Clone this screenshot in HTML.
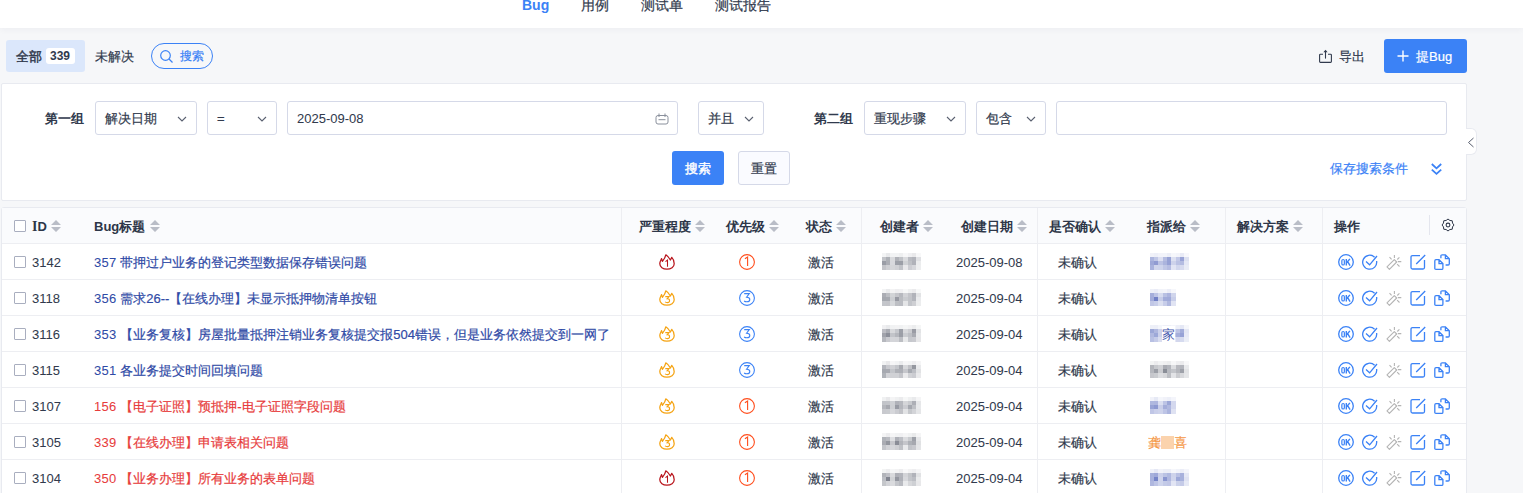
<!DOCTYPE html>
<html><head><meta charset="utf-8">
<style>
*{box-sizing:border-box;margin:0;padding:0}
html,body{width:1523px;height:493px;overflow:hidden}
body{background:#f6f7f9;font-family:"Liberation Sans",sans-serif;font-size:13px;color:#313a4d;position:relative;-webkit-text-stroke-width:0.2px}
.a{position:absolute;white-space:nowrap}
.top{left:0;top:0;width:1523px;height:28px;background:#fff;box-shadow:0 1px 7px rgba(30,40,70,.05)}
.nav{font-size:14px;top:-5px;line-height:20px;color:#313a4d}
.panel{left:1px;top:83px;width:1466px;height:118px;background:#fff;border:1px solid #e8eaf0;border-radius:2px}
.sel{height:34px;top:101px;border:1px solid #d5d9e8;border-radius:3px;background:#fff}
.sel span{position:absolute;left:9px;top:9px;line-height:16px}
.chev{position:absolute;top:12px;width:10px;height:10px}
.lbl{font-weight:bold;-webkit-text-stroke-width:0;top:110px;line-height:18px}
.tbl{left:1px;top:207px;width:1466px;height:300px;background:#fff;border:1px solid #e8eaf0;border-radius:3px}
.thead{left:2px;top:208px;width:1464px;height:36px;background:#fafbfd}
.hline{left:2px;width:1464px;height:1px;background:#edeef2}
.vline{width:1px;background:#edeef2;top:208px;height:290px}
.th{font-weight:bold;-webkit-text-stroke-width:0;top:218px;line-height:18px;color:#2d3648}
.sort{position:absolute;width:10px;height:12px}
.cb{width:12px;height:12px;border:1px solid #a9aebf;border-radius:1px;background:#fff}
.td{line-height:18px}
.blue{color:#2f4aa6}
.red{color:#e73c3c}
</style></head><body>
<div class="a top"></div>
<div class="a nav" style="left:522px;color:#3b82f6;font-weight:bold;-webkit-text-stroke-width:0">Bug</div>
<div class="a nav" style="left:581px">用例</div>
<div class="a nav" style="left:641px">测试单</div>
<div class="a nav" style="left:715px">测试报告</div>

<!-- toolbar -->
<div class="a" style="left:6px;top:40px;width:79px;height:32px;background:#dbe7fb;border-radius:3px"></div>
<div class="a" style="left:16px;top:48px;line-height:18px;-webkit-text-stroke-width:0.45px">全部</div>
<div class="a" style="left:46px;top:48px;width:29px;height:16px;background:#fff;border-radius:3px"></div>
<div class="a" style="left:50px;top:48px;line-height:16px;font-weight:bold;font-size:12px;-webkit-text-stroke-width:0">339</div>
<div class="a" style="left:95px;top:48px;line-height:18px">未解决</div>
<div class="a" style="left:151px;top:43px;width:62px;height:26px;border:1px solid #3b82f6;border-radius:13px"></div>
<svg class="a" style="left:159px;top:49px" width="15" height="15" viewBox="0 0 15 15"><circle cx="6.5" cy="6.5" r="4.8" fill="none" stroke="#3b82f6" stroke-width="1.2"/><path d="M10 10 L13.5 13.5" stroke="#3b82f6" stroke-width="1.3"/></svg>
<div class="a" style="left:180px;top:47px;line-height:18px;font-size:12px;color:#3b82f6">搜索</div>

<svg class="a" style="left:1318px;top:49px" width="15" height="15" viewBox="0 0 15 15"><path d="M5 5.3 H2.4 Q1.6 5.3 1.6 6.1 V12.6 Q1.6 13.4 2.4 13.4 H12.6 Q13.4 13.4 13.4 12.6 V6.1 Q13.4 5.3 12.6 5.3 H10" fill="none" stroke="#313a4d" stroke-width="1.1"/><path d="M7.5 9.6 V2.6" fill="none" stroke="#313a4d" stroke-width="1.1"/><path d="M5.4 3.3 L7.5 0.7 L9.6 3.3 Z" fill="#313a4d"/></svg>
<div class="a" style="left:1339px;top:48px;line-height:18px">导出</div>
<div class="a" style="left:1384px;top:39px;width:83px;height:34px;background:#3b82f6;border-radius:3px"></div>
<svg class="a" style="left:1397px;top:50px" width="12" height="12" viewBox="0 0 12 12"><path d="M6 0.5 V11.5 M0.5 6 H11.5" stroke="#fff" stroke-width="1.4"/></svg>
<div class="a" style="left:1416px;top:48px;line-height:18px;color:#fff;font-size:13px">提Bug</div>

<!-- search panel -->
<div class="a panel"></div>
<div class="a lbl" style="left:45px">第一组</div>
<div class="a sel" style="left:95px;width:102px"><span>解决日期</span><svg class="chev" style="left:81px" viewBox="0 0 10 10"><path d="M1 3 L5 7 L9 3" fill="none" stroke="#5a6070" stroke-width="1.1"/></svg></div>
<div class="a sel" style="left:207px;width:70px"><span>=</span><svg class="chev" style="left:49px" viewBox="0 0 10 10"><path d="M1 3 L5 7 L9 3" fill="none" stroke="#5a6070" stroke-width="1.1"/></svg></div>
<div class="a sel" style="left:287px;width:391px"><span style="-webkit-text-stroke-width:0.05px">2025-09-08</span>
<svg class="a" style="left:367px;top:11px" width="14" height="12" viewBox="0 0 14 12"><rect x="1" y="2.5" width="12" height="8.5" rx="2" fill="none" stroke="#8a909c" stroke-width="1"/><path d="M4 0.5 V4 M10 0.5 V4 M3.5 6.7 H10.5" stroke="#8a909c" stroke-width="1"/></svg></div>
<div class="a sel" style="left:698px;width:66px"><span>并且</span><svg class="chev" style="left:45px" viewBox="0 0 10 10"><path d="M1 3 L5 7 L9 3" fill="none" stroke="#5a6070" stroke-width="1.1"/></svg></div>
<div class="a lbl" style="left:814px">第二组</div>
<div class="a sel" style="left:864px;width:102px"><span>重现步骤</span><svg class="chev" style="left:81px" viewBox="0 0 10 10"><path d="M1 3 L5 7 L9 3" fill="none" stroke="#5a6070" stroke-width="1.1"/></svg></div>
<div class="a sel" style="left:976px;width:70px"><span>包含</span><svg class="chev" style="left:49px" viewBox="0 0 10 10"><path d="M1 3 L5 7 L9 3" fill="none" stroke="#5a6070" stroke-width="1.1"/></svg></div>
<div class="a sel" style="left:1056px;width:391px"></div>
<div class="a" style="left:672px;top:151px;width:52px;height:34px;background:#3b82f6;border-radius:3px"></div>
<div class="a" style="left:685px;top:160px;line-height:18px;color:#fff;-webkit-text-stroke-width:0.4px">搜索</div>
<div class="a" style="left:738px;top:151px;width:52px;height:34px;background:#fafbff;border:1px solid #d5d9e8;border-radius:3px"></div>
<div class="a" style="left:751px;top:160px;line-height:18px">重置</div>
<div class="a" style="left:1330px;top:160px;line-height:18px;color:#3b82f6">保存搜索条件</div>
<svg class="a" style="left:1429.5px;top:161px" width="14" height="16" viewBox="0 0 14 16"><path d="M1.8 3 L6.5 7.3 L11.2 3 M1.8 8.6 L6.5 12.9 L11.2 8.6" fill="none" stroke="#3b82f6" stroke-width="1.8"/></svg>
<div class="a" style="left:1466px;top:128px;width:11px;height:27px;background:#fff;border:1px solid #e8eaf0;border-left:none;border-radius:0 6px 6px 0"></div>
<svg class="a" style="left:1467px;top:137px" width="8" height="11" viewBox="0 0 8 11"><path d="M6.5 1 L1.5 5.5 L6.5 10" fill="none" stroke="#5a6070" stroke-width="1"/></svg>

<!-- table -->
<div class="a tbl"></div>
<div class="a thead"></div>
<div id="rows"><div class="a cb" style="left:14px;top:220px"></div>
<div class="a th" style="left:32px"><span style='font-family:Liberation Serif;font-size:14px'>I</span>D</div>
<svg class="sort a" style="left:51px;top:220px" viewBox="0 0 10 12"><path d="M5 0 L10 5 H0Z M5 12 L10 7 H0Z" fill="#b9bdc7"/></svg>
<div class="a th" style="left:94px">Bug标题</div>
<svg class="sort a" style="left:150px;top:220px" viewBox="0 0 10 12"><path d="M5 0 L10 5 H0Z M5 12 L10 7 H0Z" fill="#b9bdc7"/></svg>
<div class="a th" style="left:639px">严重程度</div>
<svg class="sort a" style="left:695px;top:220px" viewBox="0 0 10 12"><path d="M5 0 L10 5 H0Z M5 12 L10 7 H0Z" fill="#b9bdc7"/></svg>
<div class="a th" style="left:726px">优先级</div>
<svg class="sort a" style="left:769px;top:220px" viewBox="0 0 10 12"><path d="M5 0 L10 5 H0Z M5 12 L10 7 H0Z" fill="#b9bdc7"/></svg>
<div class="a th" style="left:806px">状态</div>
<svg class="sort a" style="left:836px;top:220px" viewBox="0 0 10 12"><path d="M5 0 L10 5 H0Z M5 12 L10 7 H0Z" fill="#b9bdc7"/></svg>
<div class="a th" style="left:880px">创建者</div>
<svg class="sort a" style="left:923px;top:220px" viewBox="0 0 10 12"><path d="M5 0 L10 5 H0Z M5 12 L10 7 H0Z" fill="#b9bdc7"/></svg>
<div class="a th" style="left:961px">创建日期</div>
<svg class="sort a" style="left:1017px;top:220px" viewBox="0 0 10 12"><path d="M5 0 L10 5 H0Z M5 12 L10 7 H0Z" fill="#b9bdc7"/></svg>
<div class="a th" style="left:1049px">是否确认</div>
<svg class="sort a" style="left:1105px;top:220px" viewBox="0 0 10 12"><path d="M5 0 L10 5 H0Z M5 12 L10 7 H0Z" fill="#b9bdc7"/></svg>
<div class="a th" style="left:1147px">指派给</div>
<svg class="sort a" style="left:1190px;top:220px" viewBox="0 0 10 12"><path d="M5 0 L10 5 H0Z M5 12 L10 7 H0Z" fill="#b9bdc7"/></svg>
<div class="a th" style="left:1237px">解决方案</div>
<svg class="sort a" style="left:1293px;top:220px" viewBox="0 0 10 12"><path d="M5 0 L10 5 H0Z M5 12 L10 7 H0Z" fill="#b9bdc7"/></svg>
<div class="a th" style="left:1334px">操作</div>
<div class="a" style="left:1429px;top:215px;width:1px;height:20px;background:#e4e6ee"></div>
<svg class="a" style="left:1441px;top:218px" width="14" height="14" viewBox="0 0 14 14"><path d="M7.00 1.00 L8.88 2.47 L11.24 2.76 L11.53 5.12 L13.00 7.00 L11.53 8.88 L11.24 11.24 L8.88 11.53 L7.00 13.00 L5.12 11.53 L2.76 11.24 L2.47 8.88 L1.00 7.00 L2.47 5.12 L2.76 2.76 L5.12 2.47 Z" fill="none" stroke="#2d3648" stroke-width="1" stroke-linejoin="round"/><circle cx="7" cy="7" r="1.9" fill="none" stroke="#2d3648" stroke-width="1.05"/></svg>
<div class="a hline" style="top:243px"></div>
<div class="a hline" style="top:279px"></div>
<div class="a hline" style="top:315px"></div>
<div class="a hline" style="top:351px"></div>
<div class="a hline" style="top:387px"></div>
<div class="a hline" style="top:423px"></div>
<div class="a hline" style="top:459px"></div>
<div class="a hline" style="top:495px"></div>
<div class="a vline" style="left:621px"></div>
<div class="a vline" style="left:861px"></div>
<div class="a vline" style="left:1037px"></div>
<div class="a vline" style="left:1225px"></div>
<div class="a vline" style="left:1322px"></div>
<div class="a cb" style="left:14px;top:256px"></div>
<div class="a td" style="left:32px;top:254px;-webkit-text-stroke-width:0.05px">3142</div>
<div class="a td blue" style="left:94px;top:254px"><span style="-webkit-text-stroke-width:0.05px;letter-spacing:0.25px">357 </span>带押过户业务的登记类型数据保存错误问题</div>
<svg class="a" style="left:659px;top:254px" width="16" height="16" viewBox="0 0 16 16"><path d="M7.9 15.2 C4 15.2 0.8 13 0.8 9.8 C0.8 7.8 1.8 6.2 2.6 4.6 L3.4 7.4 C4.8 5.6 6.4 3.2 6.8 0.8 C8.6 1.8 10.2 3.8 11.4 6 L12.8 3.4 C14.4 5 15.2 7.4 15.2 9.8 C15.2 13 12 15.2 7.9 15.2 Z" fill="none" stroke="#b8141b" stroke-width="1.25" stroke-linejoin="round"/><path d="M6.5 7.6 L8.5 6 V12.7" fill="none" stroke="#b8141b" stroke-width="1.05"/></svg>
<svg class="a" style="left:739px;top:254px" width="16" height="16" viewBox="0 0 16 16"><circle cx="8" cy="8" r="7.4" fill="none" stroke="#ff4d1c" stroke-width="1.1"/><path d="M5.9 4.8 L8.6 3.1 V12" fill="none" stroke="#ff4d1c" stroke-width="1.1"/></svg>
<div class="a td" style="left:808px;top:254px">激活</div>
<i class="a" style="left:882px;top:253px;width:4px;height:4px;background:#f3f4f5"></i><i class="a" style="left:886px;top:253px;width:4px;height:4px;background:#e8e9eb"></i><i class="a" style="left:890px;top:253px;width:5px;height:4px;background:#f2f3f4"></i><i class="a" style="left:895px;top:253px;width:4px;height:4px;background:#f2f3f4"></i><i class="a" style="left:899px;top:253px;width:4px;height:4px;background:#eeeff0"></i><i class="a" style="left:903px;top:253px;width:5px;height:4px;background:#f7f7f8"></i><i class="a" style="left:908px;top:253px;width:4px;height:4px;background:#f0f0f2"></i><i class="a" style="left:912px;top:253px;width:4px;height:4px;background:#e9e9eb"></i><i class="a" style="left:916px;top:253px;width:5px;height:4px;background:#f8f8f9"></i><i class="a" style="left:882px;top:257px;width:4px;height:4px;background:#c2c4c9"></i><i class="a" style="left:886px;top:257px;width:4px;height:4px;background:#adb0b6"></i><i class="a" style="left:890px;top:257px;width:5px;height:4px;background:#d9dadd"></i><i class="a" style="left:895px;top:257px;width:4px;height:4px;background:#b0b2b8"></i><i class="a" style="left:899px;top:257px;width:4px;height:4px;background:#c0c2c7"></i><i class="a" style="left:903px;top:257px;width:5px;height:4px;background:#dadbde"></i><i class="a" style="left:908px;top:257px;width:4px;height:4px;background:#b9bbc1"></i><i class="a" style="left:912px;top:257px;width:4px;height:4px;background:#b2b4bb"></i><i class="a" style="left:916px;top:257px;width:5px;height:4px;background:#e0e1e4"></i><i class="a" style="left:882px;top:261px;width:4px;height:4px;background:#9a9da6"></i><i class="a" style="left:886px;top:261px;width:4px;height:4px;background:#acaeb5"></i><i class="a" style="left:890px;top:261px;width:5px;height:4px;background:#d8d9dd"></i><i class="a" style="left:895px;top:261px;width:4px;height:4px;background:#9da0a8"></i><i class="a" style="left:899px;top:261px;width:4px;height:4px;background:#9c9fa7"></i><i class="a" style="left:903px;top:261px;width:5px;height:4px;background:#d0d2d5"></i><i class="a" style="left:908px;top:261px;width:4px;height:4px;background:#bfc1c6"></i><i class="a" style="left:912px;top:261px;width:4px;height:4px;background:#b0b2b9"></i><i class="a" style="left:916px;top:261px;width:5px;height:4px;background:#ebeced"></i><i class="a" style="left:882px;top:265px;width:4px;height:5px;background:#c4c5ca"></i><i class="a" style="left:886px;top:265px;width:4px;height:5px;background:#cfd0d4"></i><i class="a" style="left:890px;top:265px;width:5px;height:5px;background:#d5d6d9"></i><i class="a" style="left:895px;top:265px;width:4px;height:5px;background:#d0d1d5"></i><i class="a" style="left:899px;top:265px;width:4px;height:5px;background:#c1c3c8"></i><i class="a" style="left:903px;top:265px;width:5px;height:5px;background:#e9e9eb"></i><i class="a" style="left:908px;top:265px;width:4px;height:5px;background:#cdced3"></i><i class="a" style="left:912px;top:265px;width:4px;height:5px;background:#d6d7db"></i><i class="a" style="left:916px;top:265px;width:5px;height:5px;background:#edeeef"></i>
<div class="a td" style="left:956px;top:254px;-webkit-text-stroke-width:0.05px">2025-09-08</div>
<div class="a td" style="left:1058px;top:254px">未确认</div>
<i class="a" style="left:1150px;top:253px;width:4px;height:4px;background:#f1f2f9"></i><i class="a" style="left:1154px;top:253px;width:4px;height:4px;background:#edeff8"></i><i class="a" style="left:1158px;top:253px;width:5px;height:4px;background:#f2f3fa"></i><i class="a" style="left:1163px;top:253px;width:4px;height:4px;background:#f2f4fa"></i><i class="a" style="left:1167px;top:253px;width:4px;height:4px;background:#eceef7"></i><i class="a" style="left:1171px;top:253px;width:5px;height:4px;background:#f6f7fb"></i><i class="a" style="left:1176px;top:253px;width:4px;height:4px;background:#f3f4fa"></i><i class="a" style="left:1180px;top:253px;width:4px;height:4px;background:#e9ebf6"></i><i class="a" style="left:1184px;top:253px;width:5px;height:4px;background:#f8f8fc"></i><i class="a" style="left:1150px;top:257px;width:4px;height:4px;background:#acb5de"></i><i class="a" style="left:1154px;top:257px;width:4px;height:4px;background:#c0c7e6"></i><i class="a" style="left:1158px;top:257px;width:5px;height:4px;background:#dcdff1"></i><i class="a" style="left:1163px;top:257px;width:4px;height:4px;background:#b4bce1"></i><i class="a" style="left:1167px;top:257px;width:4px;height:4px;background:#97a2d5"></i><i class="a" style="left:1171px;top:257px;width:5px;height:4px;background:#dce0f1"></i><i class="a" style="left:1176px;top:257px;width:4px;height:4px;background:#c2c8e7"></i><i class="a" style="left:1180px;top:257px;width:4px;height:4px;background:#99a3d6"></i><i class="a" style="left:1184px;top:257px;width:5px;height:4px;background:#dde1f1"></i><i class="a" style="left:1150px;top:261px;width:4px;height:4px;background:#9ea8d8"></i><i class="a" style="left:1154px;top:261px;width:4px;height:4px;background:#909bd2"></i><i class="a" style="left:1158px;top:261px;width:5px;height:4px;background:#bcc3e4"></i><i class="a" style="left:1163px;top:261px;width:4px;height:4px;background:#abb4dd"></i><i class="a" style="left:1167px;top:261px;width:4px;height:4px;background:#96a1d5"></i><i class="a" style="left:1171px;top:261px;width:5px;height:4px;background:#ced3eb"></i><i class="a" style="left:1176px;top:261px;width:4px;height:4px;background:#bbc2e4"></i><i class="a" style="left:1180px;top:261px;width:4px;height:4px;background:#b4bce1"></i><i class="a" style="left:1184px;top:261px;width:5px;height:4px;background:#e5e8f5"></i><i class="a" style="left:1150px;top:265px;width:4px;height:5px;background:#a9b2dd"></i><i class="a" style="left:1154px;top:265px;width:4px;height:5px;background:#d0d5ec"></i><i class="a" style="left:1158px;top:265px;width:5px;height:5px;background:#ced4ec"></i><i class="a" style="left:1163px;top:265px;width:4px;height:5px;background:#c0c7e6"></i><i class="a" style="left:1167px;top:265px;width:4px;height:5px;background:#b6bde2"></i><i class="a" style="left:1171px;top:265px;width:5px;height:5px;background:#e2e5f4"></i><i class="a" style="left:1176px;top:265px;width:4px;height:5px;background:#d2d7ed"></i><i class="a" style="left:1180px;top:265px;width:4px;height:5px;background:#d7dbef"></i><i class="a" style="left:1184px;top:265px;width:5px;height:5px;background:#e9ecf6"></i>
<svg class="a" style="left:1338px;top:254px" width="16" height="16" viewBox="0 0 16 16"><circle cx="8" cy="8" r="7.3" fill="none" stroke="#3b82f6" stroke-width="1.3"/><rect x="3.85" y="5.5" width="2.5" height="5.5" rx="1.25" fill="none" stroke="#3b82f6" stroke-width="1.2"/><path d="M8.3 4.9 V11.6 M11.9 4.9 L8.6 8.8 M9.6 7.6 L12.1 11.6" fill="none" stroke="#3b82f6" stroke-width="1.4"/></svg><svg class="a" style="left:1362px;top:254px" width="16" height="16" viewBox="0 0 16 16"><path d="M12.6 3.2 A7 7 0 1 0 14.6 7" fill="none" stroke="#3b82f6" stroke-width="1.3"/><path d="M4 7.6 L7.6 10.8 L15 2" fill="none" stroke="#3b82f6" stroke-width="1.3"/></svg><svg class="a" style="left:1386px;top:254px" width="16" height="16" viewBox="0 0 16 16"><path d="M1 12.9 L8.3 5.6 L10.7 8 L3.4 15.3 Z" fill="none" stroke="#b4b4b4" stroke-width="1.1" stroke-linejoin="round"/><path d="M8.4 0.9 V3.9 M3.5 3.1 L5.6 5.3 M13.4 3.4 L11.3 5.5 M11.9 7.6 H15.3 M11.1 10.2 L13.5 12.5" stroke="#b4b4b4" stroke-width="1.1"/></svg><svg class="a" style="left:1410px;top:254px" width="16" height="16" viewBox="0 0 16 16"><path d="M10 1.7 H2.5 Q1 1.7 1 3.2 V13.5 Q1 15 2.5 15 H13 Q14.5 15 14.5 13.5 V6" fill="none" stroke="#3b82f6" stroke-width="1.3"/><path d="M6.2 10 L15.2 1" stroke="#3b82f6" stroke-width="1.3"/></svg><svg class="a" style="left:1434px;top:254px" width="17" height="17" viewBox="0 0 17 17"><path d="M6.9 4.3 V2 Q6.9 0.8 8.1 0.8 H11.4 L15.3 4.7 V9.8 Q15.3 11 14.1 11 H11.6 M11.4 0.8 V4.7 H15.3" fill="none" stroke="#3b82f6" stroke-width="1.3"/><path d="M0.8 6.9 Q0.8 5.7 2 5.7 H5 L8.9 9.6 V14.2 Q8.9 15.4 7.7 15.4 H2 Q0.8 15.4 0.8 14.2 Z M5 5.7 V9.6 H8.9" fill="none" stroke="#3b82f6" stroke-width="1.3"/></svg>
<div class="a cb" style="left:14px;top:292px"></div>
<div class="a td" style="left:32px;top:290px;-webkit-text-stroke-width:0.05px">3118</div>
<div class="a td blue" style="left:94px;top:290px"><span style="-webkit-text-stroke-width:0.05px;letter-spacing:0.25px">356 </span>需求26--【在线办理】未显示抵押物清单按钮</div>
<svg class="a" style="left:659px;top:290px" width="16" height="16" viewBox="0 0 16 16"><path d="M7.9 15.2 C4 15.2 0.8 13 0.8 9.8 C0.8 7.8 1.8 6.2 2.6 4.6 L3.4 7.4 C4.8 5.6 6.4 3.2 6.8 0.8 C8.6 1.8 10.2 3.8 11.4 6 L12.8 3.4 C14.4 5 15.2 7.4 15.2 9.8 C15.2 13 12 15.2 7.9 15.2 Z" fill="none" stroke="#f5a312" stroke-width="1.25" stroke-linejoin="round"/><path d="M6.3 6.6 H10.1 L8.1 8.8 Q10.6 8.8 10.6 10.7 Q10.6 12.6 8.3 12.6 Q6.9 12.6 6 11.9" fill="none" stroke="#f5a312" stroke-width="1.05"/></svg>
<svg class="a" style="left:739px;top:290px" width="16" height="16" viewBox="0 0 16 16"><circle cx="8" cy="8" r="7.4" fill="none" stroke="#3b82f6" stroke-width="1.1"/><path d="M5.2 3.6 H10.3 L7.6 7.2 Q10.8 7.2 10.8 9.5 Q10.8 11.8 7.9 11.8 Q6.2 11.8 5.1 11" fill="none" stroke="#3b82f6" stroke-width="1.1"/></svg>
<div class="a td" style="left:808px;top:290px">激活</div>
<i class="a" style="left:882px;top:289px;width:4px;height:4px;background:#f3f4f5"></i><i class="a" style="left:886px;top:289px;width:4px;height:4px;background:#e9eaec"></i><i class="a" style="left:890px;top:289px;width:5px;height:4px;background:#f3f3f4"></i><i class="a" style="left:895px;top:289px;width:4px;height:4px;background:#eeeef0"></i><i class="a" style="left:899px;top:289px;width:4px;height:4px;background:#f0f0f2"></i><i class="a" style="left:903px;top:289px;width:5px;height:4px;background:#f7f8f8"></i><i class="a" style="left:908px;top:289px;width:4px;height:4px;background:#eff0f1"></i><i class="a" style="left:912px;top:289px;width:4px;height:4px;background:#eaeaec"></i><i class="a" style="left:916px;top:289px;width:5px;height:4px;background:#f7f8f8"></i><i class="a" style="left:882px;top:293px;width:4px;height:4px;background:#abadb4"></i><i class="a" style="left:886px;top:293px;width:4px;height:4px;background:#bcbec3"></i><i class="a" style="left:890px;top:293px;width:5px;height:4px;background:#d2d4d7"></i><i class="a" style="left:895px;top:293px;width:4px;height:4px;background:#c5c6cb"></i><i class="a" style="left:899px;top:293px;width:4px;height:4px;background:#b7b9bf"></i><i class="a" style="left:903px;top:293px;width:5px;height:4px;background:#d2d3d7"></i><i class="a" style="left:908px;top:293px;width:4px;height:4px;background:#c4c5ca"></i><i class="a" style="left:912px;top:293px;width:4px;height:4px;background:#b1b3ba"></i><i class="a" style="left:916px;top:293px;width:5px;height:4px;background:#e2e3e5"></i><i class="a" style="left:882px;top:297px;width:4px;height:4px;background:#a5a8af"></i><i class="a" style="left:886px;top:297px;width:4px;height:4px;background:#a6a9b0"></i><i class="a" style="left:890px;top:297px;width:5px;height:4px;background:#ccced2"></i><i class="a" style="left:895px;top:297px;width:4px;height:4px;background:#989aa3"></i><i class="a" style="left:899px;top:297px;width:4px;height:4px;background:#babcc1"></i><i class="a" style="left:903px;top:297px;width:5px;height:4px;background:#caccd0"></i><i class="a" style="left:908px;top:297px;width:4px;height:4px;background:#c2c4c9"></i><i class="a" style="left:912px;top:297px;width:4px;height:4px;background:#b3b5bc"></i><i class="a" style="left:916px;top:297px;width:5px;height:4px;background:#eaebed"></i><i class="a" style="left:882px;top:301px;width:4px;height:5px;background:#c4c6cb"></i><i class="a" style="left:886px;top:301px;width:4px;height:5px;background:#c3c4c9"></i><i class="a" style="left:890px;top:301px;width:5px;height:5px;background:#d6d8db"></i><i class="a" style="left:895px;top:301px;width:4px;height:5px;background:#bdbfc4"></i><i class="a" style="left:899px;top:301px;width:4px;height:5px;background:#babcc2"></i><i class="a" style="left:903px;top:301px;width:5px;height:5px;background:#e4e5e7"></i><i class="a" style="left:908px;top:301px;width:4px;height:5px;background:#c3c5ca"></i><i class="a" style="left:912px;top:301px;width:4px;height:5px;background:#cecfd3"></i><i class="a" style="left:916px;top:301px;width:5px;height:5px;background:#ecedee"></i>
<div class="a td" style="left:956px;top:290px;-webkit-text-stroke-width:0.05px">2025-09-04</div>
<div class="a td" style="left:1058px;top:290px">未确认</div>
<i class="a" style="left:1150px;top:289px;width:4px;height:4px;background:#eef0f8"></i><i class="a" style="left:1154px;top:289px;width:4px;height:4px;background:#eaecf7"></i><i class="a" style="left:1158px;top:289px;width:5px;height:4px;background:#f1f3f9"></i><i class="a" style="left:1163px;top:289px;width:4px;height:4px;background:#f3f4fa"></i><i class="a" style="left:1167px;top:289px;width:4px;height:4px;background:#ebedf7"></i><i class="a" style="left:1171px;top:289px;width:5px;height:4px;background:#f6f7fb"></i><i class="a" style="left:1150px;top:293px;width:4px;height:4px;background:#a5aedb"></i><i class="a" style="left:1154px;top:293px;width:4px;height:4px;background:#bdc4e5"></i><i class="a" style="left:1158px;top:293px;width:5px;height:4px;background:#d6dbef"></i><i class="a" style="left:1163px;top:293px;width:4px;height:4px;background:#b9c1e3"></i><i class="a" style="left:1167px;top:293px;width:4px;height:4px;background:#acb4de"></i><i class="a" style="left:1171px;top:293px;width:5px;height:4px;background:#d0d5ec"></i><i class="a" style="left:1150px;top:297px;width:4px;height:4px;background:#a3acda"></i><i class="a" style="left:1154px;top:297px;width:4px;height:4px;background:#7180c6"></i><i class="a" style="left:1158px;top:297px;width:5px;height:4px;background:#c6cce8"></i><i class="a" style="left:1163px;top:297px;width:4px;height:4px;background:#a2acda"></i><i class="a" style="left:1167px;top:297px;width:4px;height:4px;background:#a0aad9"></i><i class="a" style="left:1171px;top:297px;width:5px;height:4px;background:#c8cee9"></i><i class="a" style="left:1150px;top:301px;width:4px;height:5px;background:#c1c7e6"></i><i class="a" style="left:1154px;top:301px;width:4px;height:5px;background:#c8cee9"></i><i class="a" style="left:1158px;top:301px;width:5px;height:5px;background:#dbdff0"></i><i class="a" style="left:1163px;top:301px;width:4px;height:5px;background:#c7cde9"></i><i class="a" style="left:1167px;top:301px;width:4px;height:5px;background:#b0b8df"></i><i class="a" style="left:1171px;top:301px;width:5px;height:5px;background:#e1e4f3"></i>
<svg class="a" style="left:1338px;top:290px" width="16" height="16" viewBox="0 0 16 16"><circle cx="8" cy="8" r="7.3" fill="none" stroke="#3b82f6" stroke-width="1.3"/><rect x="3.85" y="5.5" width="2.5" height="5.5" rx="1.25" fill="none" stroke="#3b82f6" stroke-width="1.2"/><path d="M8.3 4.9 V11.6 M11.9 4.9 L8.6 8.8 M9.6 7.6 L12.1 11.6" fill="none" stroke="#3b82f6" stroke-width="1.4"/></svg><svg class="a" style="left:1362px;top:290px" width="16" height="16" viewBox="0 0 16 16"><path d="M12.6 3.2 A7 7 0 1 0 14.6 7" fill="none" stroke="#3b82f6" stroke-width="1.3"/><path d="M4 7.6 L7.6 10.8 L15 2" fill="none" stroke="#3b82f6" stroke-width="1.3"/></svg><svg class="a" style="left:1386px;top:290px" width="16" height="16" viewBox="0 0 16 16"><path d="M1 12.9 L8.3 5.6 L10.7 8 L3.4 15.3 Z" fill="none" stroke="#b4b4b4" stroke-width="1.1" stroke-linejoin="round"/><path d="M8.4 0.9 V3.9 M3.5 3.1 L5.6 5.3 M13.4 3.4 L11.3 5.5 M11.9 7.6 H15.3 M11.1 10.2 L13.5 12.5" stroke="#b4b4b4" stroke-width="1.1"/></svg><svg class="a" style="left:1410px;top:290px" width="16" height="16" viewBox="0 0 16 16"><path d="M10 1.7 H2.5 Q1 1.7 1 3.2 V13.5 Q1 15 2.5 15 H13 Q14.5 15 14.5 13.5 V6" fill="none" stroke="#3b82f6" stroke-width="1.3"/><path d="M6.2 10 L15.2 1" stroke="#3b82f6" stroke-width="1.3"/></svg><svg class="a" style="left:1434px;top:290px" width="17" height="17" viewBox="0 0 17 17"><path d="M6.9 4.3 V2 Q6.9 0.8 8.1 0.8 H11.4 L15.3 4.7 V9.8 Q15.3 11 14.1 11 H11.6 M11.4 0.8 V4.7 H15.3" fill="none" stroke="#3b82f6" stroke-width="1.3"/><path d="M0.8 6.9 Q0.8 5.7 2 5.7 H5 L8.9 9.6 V14.2 Q8.9 15.4 7.7 15.4 H2 Q0.8 15.4 0.8 14.2 Z M5 5.7 V9.6 H8.9" fill="none" stroke="#3b82f6" stroke-width="1.3"/></svg>
<div class="a cb" style="left:14px;top:328px"></div>
<div class="a td" style="left:32px;top:326px;-webkit-text-stroke-width:0.05px">3116</div>
<div class="a td blue" style="left:94px;top:326px"><span style="-webkit-text-stroke-width:0.05px;letter-spacing:0.25px">353 </span>【业务复核】房屋批量抵押注销业务复核提交报504错误，但是业务依然提交到一网了</div>
<svg class="a" style="left:659px;top:326px" width="16" height="16" viewBox="0 0 16 16"><path d="M7.9 15.2 C4 15.2 0.8 13 0.8 9.8 C0.8 7.8 1.8 6.2 2.6 4.6 L3.4 7.4 C4.8 5.6 6.4 3.2 6.8 0.8 C8.6 1.8 10.2 3.8 11.4 6 L12.8 3.4 C14.4 5 15.2 7.4 15.2 9.8 C15.2 13 12 15.2 7.9 15.2 Z" fill="none" stroke="#f5a312" stroke-width="1.25" stroke-linejoin="round"/><path d="M6.3 6.6 H10.1 L8.1 8.8 Q10.6 8.8 10.6 10.7 Q10.6 12.6 8.3 12.6 Q6.9 12.6 6 11.9" fill="none" stroke="#f5a312" stroke-width="1.05"/></svg>
<svg class="a" style="left:739px;top:326px" width="16" height="16" viewBox="0 0 16 16"><circle cx="8" cy="8" r="7.4" fill="none" stroke="#3b82f6" stroke-width="1.1"/><path d="M5.2 3.6 H10.3 L7.6 7.2 Q10.8 7.2 10.8 9.5 Q10.8 11.8 7.9 11.8 Q6.2 11.8 5.1 11" fill="none" stroke="#3b82f6" stroke-width="1.1"/></svg>
<div class="a td" style="left:808px;top:326px">激活</div>
<i class="a" style="left:882px;top:325px;width:4px;height:4px;background:#f0f0f2"></i><i class="a" style="left:886px;top:325px;width:4px;height:4px;background:#e9eaec"></i><i class="a" style="left:890px;top:325px;width:5px;height:4px;background:#f1f2f3"></i><i class="a" style="left:895px;top:325px;width:4px;height:4px;background:#f3f3f4"></i><i class="a" style="left:899px;top:325px;width:4px;height:4px;background:#f1f2f3"></i><i class="a" style="left:903px;top:325px;width:5px;height:4px;background:#f5f6f6"></i><i class="a" style="left:908px;top:325px;width:4px;height:4px;background:#f2f2f3"></i><i class="a" style="left:912px;top:325px;width:4px;height:4px;background:#ecedee"></i><i class="a" style="left:916px;top:325px;width:5px;height:4px;background:#f5f6f6"></i><i class="a" style="left:882px;top:329px;width:4px;height:4px;background:#bdbec4"></i><i class="a" style="left:886px;top:329px;width:4px;height:4px;background:#abadb4"></i><i class="a" style="left:890px;top:329px;width:5px;height:4px;background:#d8d9dc"></i><i class="a" style="left:895px;top:329px;width:4px;height:4px;background:#c6c8cd"></i><i class="a" style="left:899px;top:329px;width:4px;height:4px;background:#9da0a8"></i><i class="a" style="left:903px;top:329px;width:5px;height:4px;background:#d8d9dc"></i><i class="a" style="left:908px;top:329px;width:4px;height:4px;background:#cccdd1"></i><i class="a" style="left:912px;top:329px;width:4px;height:4px;background:#9a9ca5"></i><i class="a" style="left:916px;top:329px;width:5px;height:4px;background:#e2e3e5"></i><i class="a" style="left:882px;top:333px;width:4px;height:4px;background:#a1a3ab"></i><i class="a" style="left:886px;top:333px;width:4px;height:4px;background:#8d909a"></i><i class="a" style="left:890px;top:333px;width:5px;height:4px;background:#c2c4c9"></i><i class="a" style="left:895px;top:333px;width:4px;height:4px;background:#b5b7bd"></i><i class="a" style="left:899px;top:333px;width:4px;height:4px;background:#9b9ea6"></i><i class="a" style="left:903px;top:333px;width:5px;height:4px;background:#caccd0"></i><i class="a" style="left:908px;top:333px;width:4px;height:4px;background:#bec0c5"></i><i class="a" style="left:912px;top:333px;width:4px;height:4px;background:#a9abb2"></i><i class="a" style="left:916px;top:333px;width:5px;height:4px;background:#e7e8ea"></i><i class="a" style="left:882px;top:337px;width:4px;height:5px;background:#b6b8be"></i><i class="a" style="left:886px;top:337px;width:4px;height:5px;background:#c9cacf"></i><i class="a" style="left:890px;top:337px;width:5px;height:5px;background:#d4d5d9"></i><i class="a" style="left:895px;top:337px;width:4px;height:5px;background:#d3d4d8"></i><i class="a" style="left:899px;top:337px;width:4px;height:5px;background:#bcbec3"></i><i class="a" style="left:903px;top:337px;width:5px;height:5px;background:#e8e9ea"></i><i class="a" style="left:908px;top:337px;width:4px;height:5px;background:#c6c8cd"></i><i class="a" style="left:912px;top:337px;width:4px;height:5px;background:#c9cacf"></i><i class="a" style="left:916px;top:337px;width:5px;height:5px;background:#e6e6e8"></i>
<div class="a td" style="left:956px;top:326px;-webkit-text-stroke-width:0.05px">2025-09-04</div>
<div class="a td" style="left:1058px;top:326px">未确认</div>
<i class="a" style="left:1150px;top:325px;width:4px;height:4px;background:#eef0f8"></i><i class="a" style="left:1154px;top:325px;width:4px;height:4px;background:#edeff8"></i><i class="a" style="left:1158px;top:325px;width:5px;height:4px;background:#f4f6fb"></i><i class="a" style="left:1163px;top:325px;width:4px;height:4px;background:#eff0f8"></i><i class="a" style="left:1167px;top:325px;width:4px;height:4px;background:#eef0f8"></i><i class="a" style="left:1171px;top:325px;width:5px;height:4px;background:#f4f5fb"></i><i class="a" style="left:1176px;top:325px;width:4px;height:4px;background:#edeff8"></i><i class="a" style="left:1180px;top:325px;width:4px;height:4px;background:#e5e8f5"></i><i class="a" style="left:1184px;top:325px;width:5px;height:4px;background:#f6f7fb"></i><i class="a" style="left:1150px;top:329px;width:4px;height:4px;background:#9ca7d7"></i><i class="a" style="left:1154px;top:329px;width:4px;height:4px;background:#afb7df"></i><i class="a" style="left:1158px;top:329px;width:5px;height:4px;background:#cdd2eb"></i><i class="a" style="left:1163px;top:329px;width:4px;height:4px;background:#b7bfe2"></i><i class="a" style="left:1167px;top:329px;width:4px;height:4px;background:#a3acda"></i><i class="a" style="left:1171px;top:329px;width:5px;height:4px;background:#d6daef"></i><i class="a" style="left:1176px;top:329px;width:4px;height:4px;background:#bcc3e4"></i><i class="a" style="left:1180px;top:329px;width:4px;height:4px;background:#a3adda"></i><i class="a" style="left:1184px;top:329px;width:5px;height:4px;background:#e4e7f4"></i><i class="a" style="left:1150px;top:333px;width:4px;height:4px;background:#b1b9e0"></i><i class="a" style="left:1154px;top:333px;width:4px;height:4px;background:#9da8d8"></i><i class="a" style="left:1158px;top:333px;width:5px;height:4px;background:#cdd2eb"></i><i class="a" style="left:1163px;top:333px;width:4px;height:4px;background:#8b98d1"></i><i class="a" style="left:1167px;top:333px;width:4px;height:4px;background:#9ea8d8"></i><i class="a" style="left:1171px;top:333px;width:5px;height:4px;background:#c2c8e7"></i><i class="a" style="left:1176px;top:333px;width:4px;height:4px;background:#a5afdb"></i><i class="a" style="left:1180px;top:333px;width:4px;height:4px;background:#97a2d6"></i><i class="a" style="left:1184px;top:333px;width:5px;height:4px;background:#e8eaf6"></i><i class="a" style="left:1150px;top:337px;width:4px;height:5px;background:#b8c0e3"></i><i class="a" style="left:1154px;top:337px;width:4px;height:5px;background:#c5cbe8"></i><i class="a" style="left:1158px;top:337px;width:5px;height:5px;background:#dadef0"></i><i class="a" style="left:1163px;top:337px;width:4px;height:5px;background:#bac1e3"></i><i class="a" style="left:1167px;top:337px;width:4px;height:5px;background:#a9b2dd"></i><i class="a" style="left:1171px;top:337px;width:5px;height:5px;background:#e5e7f4"></i><i class="a" style="left:1176px;top:337px;width:4px;height:5px;background:#d3d7ed"></i><i class="a" style="left:1180px;top:337px;width:4px;height:5px;background:#d6dbef"></i><i class="a" style="left:1184px;top:337px;width:5px;height:5px;background:#ebeef7"></i>
<div class="a td" style="left:1162px;top:326px;color:#4356ad;background:#fff;-webkit-text-stroke-width:0">家</div>
<svg class="a" style="left:1338px;top:326px" width="16" height="16" viewBox="0 0 16 16"><circle cx="8" cy="8" r="7.3" fill="none" stroke="#3b82f6" stroke-width="1.3"/><rect x="3.85" y="5.5" width="2.5" height="5.5" rx="1.25" fill="none" stroke="#3b82f6" stroke-width="1.2"/><path d="M8.3 4.9 V11.6 M11.9 4.9 L8.6 8.8 M9.6 7.6 L12.1 11.6" fill="none" stroke="#3b82f6" stroke-width="1.4"/></svg><svg class="a" style="left:1362px;top:326px" width="16" height="16" viewBox="0 0 16 16"><path d="M12.6 3.2 A7 7 0 1 0 14.6 7" fill="none" stroke="#3b82f6" stroke-width="1.3"/><path d="M4 7.6 L7.6 10.8 L15 2" fill="none" stroke="#3b82f6" stroke-width="1.3"/></svg><svg class="a" style="left:1386px;top:326px" width="16" height="16" viewBox="0 0 16 16"><path d="M1 12.9 L8.3 5.6 L10.7 8 L3.4 15.3 Z" fill="none" stroke="#b4b4b4" stroke-width="1.1" stroke-linejoin="round"/><path d="M8.4 0.9 V3.9 M3.5 3.1 L5.6 5.3 M13.4 3.4 L11.3 5.5 M11.9 7.6 H15.3 M11.1 10.2 L13.5 12.5" stroke="#b4b4b4" stroke-width="1.1"/></svg><svg class="a" style="left:1410px;top:326px" width="16" height="16" viewBox="0 0 16 16"><path d="M10 1.7 H2.5 Q1 1.7 1 3.2 V13.5 Q1 15 2.5 15 H13 Q14.5 15 14.5 13.5 V6" fill="none" stroke="#3b82f6" stroke-width="1.3"/><path d="M6.2 10 L15.2 1" stroke="#3b82f6" stroke-width="1.3"/></svg><svg class="a" style="left:1434px;top:326px" width="17" height="17" viewBox="0 0 17 17"><path d="M6.9 4.3 V2 Q6.9 0.8 8.1 0.8 H11.4 L15.3 4.7 V9.8 Q15.3 11 14.1 11 H11.6 M11.4 0.8 V4.7 H15.3" fill="none" stroke="#3b82f6" stroke-width="1.3"/><path d="M0.8 6.9 Q0.8 5.7 2 5.7 H5 L8.9 9.6 V14.2 Q8.9 15.4 7.7 15.4 H2 Q0.8 15.4 0.8 14.2 Z M5 5.7 V9.6 H8.9" fill="none" stroke="#3b82f6" stroke-width="1.3"/></svg>
<div class="a cb" style="left:14px;top:364px"></div>
<div class="a td" style="left:32px;top:362px;-webkit-text-stroke-width:0.05px">3115</div>
<div class="a td blue" style="left:94px;top:362px"><span style="-webkit-text-stroke-width:0.05px;letter-spacing:0.25px">351 </span>各业务提交时间回填问题</div>
<svg class="a" style="left:659px;top:362px" width="16" height="16" viewBox="0 0 16 16"><path d="M7.9 15.2 C4 15.2 0.8 13 0.8 9.8 C0.8 7.8 1.8 6.2 2.6 4.6 L3.4 7.4 C4.8 5.6 6.4 3.2 6.8 0.8 C8.6 1.8 10.2 3.8 11.4 6 L12.8 3.4 C14.4 5 15.2 7.4 15.2 9.8 C15.2 13 12 15.2 7.9 15.2 Z" fill="none" stroke="#f5a312" stroke-width="1.25" stroke-linejoin="round"/><path d="M6.3 6.6 H10.1 L8.1 8.8 Q10.6 8.8 10.6 10.7 Q10.6 12.6 8.3 12.6 Q6.9 12.6 6 11.9" fill="none" stroke="#f5a312" stroke-width="1.05"/></svg>
<svg class="a" style="left:739px;top:362px" width="16" height="16" viewBox="0 0 16 16"><circle cx="8" cy="8" r="7.4" fill="none" stroke="#3b82f6" stroke-width="1.1"/><path d="M5.2 3.6 H10.3 L7.6 7.2 Q10.8 7.2 10.8 9.5 Q10.8 11.8 7.9 11.8 Q6.2 11.8 5.1 11" fill="none" stroke="#3b82f6" stroke-width="1.1"/></svg>
<div class="a td" style="left:808px;top:362px">激活</div>
<i class="a" style="left:882px;top:361px;width:4px;height:4px;background:#f1f2f3"></i><i class="a" style="left:886px;top:361px;width:4px;height:4px;background:#e8e8ea"></i><i class="a" style="left:890px;top:361px;width:5px;height:4px;background:#f6f6f7"></i><i class="a" style="left:895px;top:361px;width:4px;height:4px;background:#f2f3f4"></i><i class="a" style="left:899px;top:361px;width:4px;height:4px;background:#eaebed"></i><i class="a" style="left:903px;top:361px;width:5px;height:4px;background:#f6f6f7"></i><i class="a" style="left:908px;top:361px;width:4px;height:4px;background:#f3f4f5"></i><i class="a" style="left:912px;top:361px;width:4px;height:4px;background:#ededef"></i><i class="a" style="left:916px;top:361px;width:5px;height:4px;background:#f5f5f6"></i><i class="a" style="left:882px;top:365px;width:4px;height:4px;background:#b3b5bc"></i><i class="a" style="left:886px;top:365px;width:4px;height:4px;background:#c8c9ce"></i><i class="a" style="left:890px;top:365px;width:5px;height:4px;background:#d0d1d5"></i><i class="a" style="left:895px;top:365px;width:4px;height:4px;background:#c4c6cb"></i><i class="a" style="left:899px;top:365px;width:4px;height:4px;background:#a8aab1"></i><i class="a" style="left:903px;top:365px;width:5px;height:4px;background:#d7d8db"></i><i class="a" style="left:908px;top:365px;width:4px;height:4px;background:#c1c2c7"></i><i class="a" style="left:912px;top:365px;width:4px;height:4px;background:#9598a0"></i><i class="a" style="left:916px;top:365px;width:5px;height:4px;background:#e9eaec"></i><i class="a" style="left:882px;top:369px;width:4px;height:4px;background:#a6a9b0"></i><i class="a" style="left:886px;top:369px;width:4px;height:4px;background:#a8aab1"></i><i class="a" style="left:890px;top:369px;width:5px;height:4px;background:#c3c5ca"></i><i class="a" style="left:895px;top:369px;width:4px;height:4px;background:#afb1b7"></i><i class="a" style="left:899px;top:369px;width:4px;height:4px;background:#adafb6"></i><i class="a" style="left:903px;top:369px;width:5px;height:4px;background:#c6c7cc"></i><i class="a" style="left:908px;top:369px;width:4px;height:4px;background:#a8abb2"></i><i class="a" style="left:912px;top:369px;width:4px;height:4px;background:#bcbec4"></i><i class="a" style="left:916px;top:369px;width:5px;height:4px;background:#e1e2e4"></i><i class="a" style="left:882px;top:373px;width:4px;height:5px;background:#b0b3b9"></i><i class="a" style="left:886px;top:373px;width:4px;height:5px;background:#d2d3d7"></i><i class="a" style="left:890px;top:373px;width:5px;height:5px;background:#d0d1d5"></i><i class="a" style="left:895px;top:373px;width:4px;height:5px;background:#d0d1d5"></i><i class="a" style="left:899px;top:373px;width:4px;height:5px;background:#c4c5ca"></i><i class="a" style="left:903px;top:373px;width:5px;height:5px;background:#eaeaec"></i><i class="a" style="left:908px;top:373px;width:4px;height:5px;background:#d1d2d6"></i><i class="a" style="left:912px;top:373px;width:4px;height:5px;background:#cbccd1"></i><i class="a" style="left:916px;top:373px;width:5px;height:5px;background:#e9e9eb"></i>
<div class="a td" style="left:956px;top:362px;-webkit-text-stroke-width:0.05px">2025-09-04</div>
<div class="a td" style="left:1058px;top:362px">未确认</div>
<i class="a" style="left:1150px;top:361px;width:4px;height:4px;background:#f3f4f4"></i><i class="a" style="left:1154px;top:361px;width:4px;height:4px;background:#ececee"></i><i class="a" style="left:1158px;top:361px;width:5px;height:4px;background:#f2f3f4"></i><i class="a" style="left:1163px;top:361px;width:4px;height:4px;background:#f0f0f1"></i><i class="a" style="left:1167px;top:361px;width:4px;height:4px;background:#ecedee"></i><i class="a" style="left:1171px;top:361px;width:5px;height:4px;background:#f7f7f8"></i><i class="a" style="left:1176px;top:361px;width:4px;height:4px;background:#efeff1"></i><i class="a" style="left:1180px;top:361px;width:4px;height:4px;background:#ebebed"></i><i class="a" style="left:1184px;top:361px;width:5px;height:4px;background:#f8f8f9"></i><i class="a" style="left:1150px;top:365px;width:4px;height:4px;background:#b3b5bb"></i><i class="a" style="left:1154px;top:365px;width:4px;height:4px;background:#c7c9cd"></i><i class="a" style="left:1158px;top:365px;width:5px;height:4px;background:#d0d1d5"></i><i class="a" style="left:1163px;top:365px;width:4px;height:4px;background:#aaacb3"></i><i class="a" style="left:1167px;top:365px;width:4px;height:4px;background:#b3b5bc"></i><i class="a" style="left:1171px;top:365px;width:5px;height:4px;background:#dcdde0"></i><i class="a" style="left:1176px;top:365px;width:4px;height:4px;background:#b8b9bf"></i><i class="a" style="left:1180px;top:365px;width:4px;height:4px;background:#b3b5bc"></i><i class="a" style="left:1184px;top:365px;width:5px;height:4px;background:#e9eaec"></i><i class="a" style="left:1150px;top:369px;width:4px;height:4px;background:#b6b8be"></i><i class="a" style="left:1154px;top:369px;width:4px;height:4px;background:#9c9fa7"></i><i class="a" style="left:1158px;top:369px;width:5px;height:4px;background:#cbccd0"></i><i class="a" style="left:1163px;top:369px;width:4px;height:4px;background:#8a8e97"></i><i class="a" style="left:1167px;top:369px;width:4px;height:4px;background:#b8bac0"></i><i class="a" style="left:1171px;top:369px;width:5px;height:4px;background:#c3c5ca"></i><i class="a" style="left:1176px;top:369px;width:4px;height:4px;background:#b4b6bc"></i><i class="a" style="left:1180px;top:369px;width:4px;height:4px;background:#9ea1a9"></i><i class="a" style="left:1184px;top:369px;width:5px;height:4px;background:#e2e3e5"></i><i class="a" style="left:1150px;top:373px;width:4px;height:5px;background:#c6c7cc"></i><i class="a" style="left:1154px;top:373px;width:4px;height:5px;background:#caccd0"></i><i class="a" style="left:1158px;top:373px;width:5px;height:5px;background:#dcdde0"></i><i class="a" style="left:1163px;top:373px;width:4px;height:5px;background:#d6d7da"></i><i class="a" style="left:1167px;top:373px;width:4px;height:5px;background:#bcbec3"></i><i class="a" style="left:1171px;top:373px;width:5px;height:5px;background:#e2e3e6"></i><i class="a" style="left:1176px;top:373px;width:4px;height:5px;background:#cbccd0"></i><i class="a" style="left:1180px;top:373px;width:4px;height:5px;background:#d8d9dc"></i><i class="a" style="left:1184px;top:373px;width:5px;height:5px;background:#e5e6e8"></i>
<svg class="a" style="left:1338px;top:362px" width="16" height="16" viewBox="0 0 16 16"><circle cx="8" cy="8" r="7.3" fill="none" stroke="#3b82f6" stroke-width="1.3"/><rect x="3.85" y="5.5" width="2.5" height="5.5" rx="1.25" fill="none" stroke="#3b82f6" stroke-width="1.2"/><path d="M8.3 4.9 V11.6 M11.9 4.9 L8.6 8.8 M9.6 7.6 L12.1 11.6" fill="none" stroke="#3b82f6" stroke-width="1.4"/></svg><svg class="a" style="left:1362px;top:362px" width="16" height="16" viewBox="0 0 16 16"><path d="M12.6 3.2 A7 7 0 1 0 14.6 7" fill="none" stroke="#3b82f6" stroke-width="1.3"/><path d="M4 7.6 L7.6 10.8 L15 2" fill="none" stroke="#3b82f6" stroke-width="1.3"/></svg><svg class="a" style="left:1386px;top:362px" width="16" height="16" viewBox="0 0 16 16"><path d="M1 12.9 L8.3 5.6 L10.7 8 L3.4 15.3 Z" fill="none" stroke="#b4b4b4" stroke-width="1.1" stroke-linejoin="round"/><path d="M8.4 0.9 V3.9 M3.5 3.1 L5.6 5.3 M13.4 3.4 L11.3 5.5 M11.9 7.6 H15.3 M11.1 10.2 L13.5 12.5" stroke="#b4b4b4" stroke-width="1.1"/></svg><svg class="a" style="left:1410px;top:362px" width="16" height="16" viewBox="0 0 16 16"><path d="M10 1.7 H2.5 Q1 1.7 1 3.2 V13.5 Q1 15 2.5 15 H13 Q14.5 15 14.5 13.5 V6" fill="none" stroke="#3b82f6" stroke-width="1.3"/><path d="M6.2 10 L15.2 1" stroke="#3b82f6" stroke-width="1.3"/></svg><svg class="a" style="left:1434px;top:362px" width="17" height="17" viewBox="0 0 17 17"><path d="M6.9 4.3 V2 Q6.9 0.8 8.1 0.8 H11.4 L15.3 4.7 V9.8 Q15.3 11 14.1 11 H11.6 M11.4 0.8 V4.7 H15.3" fill="none" stroke="#3b82f6" stroke-width="1.3"/><path d="M0.8 6.9 Q0.8 5.7 2 5.7 H5 L8.9 9.6 V14.2 Q8.9 15.4 7.7 15.4 H2 Q0.8 15.4 0.8 14.2 Z M5 5.7 V9.6 H8.9" fill="none" stroke="#3b82f6" stroke-width="1.3"/></svg>
<div class="a cb" style="left:14px;top:400px"></div>
<div class="a td" style="left:32px;top:398px;-webkit-text-stroke-width:0.05px">3107</div>
<div class="a td red" style="left:94px;top:398px"><span style="-webkit-text-stroke-width:0.05px;letter-spacing:0.25px">156 </span>【电子证照】预抵押-电子证照字段问题</div>
<svg class="a" style="left:659px;top:398px" width="16" height="16" viewBox="0 0 16 16"><path d="M7.9 15.2 C4 15.2 0.8 13 0.8 9.8 C0.8 7.8 1.8 6.2 2.6 4.6 L3.4 7.4 C4.8 5.6 6.4 3.2 6.8 0.8 C8.6 1.8 10.2 3.8 11.4 6 L12.8 3.4 C14.4 5 15.2 7.4 15.2 9.8 C15.2 13 12 15.2 7.9 15.2 Z" fill="none" stroke="#f5a312" stroke-width="1.25" stroke-linejoin="round"/><path d="M6.3 6.6 H10.1 L8.1 8.8 Q10.6 8.8 10.6 10.7 Q10.6 12.6 8.3 12.6 Q6.9 12.6 6 11.9" fill="none" stroke="#f5a312" stroke-width="1.05"/></svg>
<svg class="a" style="left:739px;top:398px" width="16" height="16" viewBox="0 0 16 16"><circle cx="8" cy="8" r="7.4" fill="none" stroke="#ff4d1c" stroke-width="1.1"/><path d="M5.9 4.8 L8.6 3.1 V12" fill="none" stroke="#ff4d1c" stroke-width="1.1"/></svg>
<div class="a td" style="left:808px;top:398px">激活</div>
<i class="a" style="left:882px;top:397px;width:4px;height:4px;background:#f0f1f2"></i><i class="a" style="left:886px;top:397px;width:4px;height:4px;background:#e8e8ea"></i><i class="a" style="left:890px;top:397px;width:5px;height:4px;background:#f4f4f5"></i><i class="a" style="left:895px;top:397px;width:4px;height:4px;background:#eff0f1"></i><i class="a" style="left:899px;top:397px;width:4px;height:4px;background:#ebebed"></i><i class="a" style="left:903px;top:397px;width:5px;height:4px;background:#f6f7f7"></i><i class="a" style="left:908px;top:397px;width:4px;height:4px;background:#eff0f1"></i><i class="a" style="left:912px;top:397px;width:4px;height:4px;background:#e9eaec"></i><i class="a" style="left:916px;top:397px;width:5px;height:4px;background:#f5f5f6"></i><i class="a" style="left:882px;top:401px;width:4px;height:4px;background:#c2c4c9"></i><i class="a" style="left:886px;top:401px;width:4px;height:4px;background:#c3c5ca"></i><i class="a" style="left:890px;top:401px;width:5px;height:4px;background:#ced0d4"></i><i class="a" style="left:895px;top:401px;width:4px;height:4px;background:#b0b2b9"></i><i class="a" style="left:899px;top:401px;width:4px;height:4px;background:#b6b8be"></i><i class="a" style="left:903px;top:401px;width:5px;height:4px;background:#d5d6d9"></i><i class="a" style="left:908px;top:401px;width:4px;height:4px;background:#c9cbcf"></i><i class="a" style="left:912px;top:401px;width:4px;height:4px;background:#adafb6"></i><i class="a" style="left:916px;top:401px;width:5px;height:4px;background:#e6e7e9"></i><i class="a" style="left:882px;top:405px;width:4px;height:4px;background:#b5b7bd"></i><i class="a" style="left:886px;top:405px;width:4px;height:4px;background:#a7a9b0"></i><i class="a" style="left:890px;top:405px;width:5px;height:4px;background:#cdcfd3"></i><i class="a" style="left:895px;top:405px;width:4px;height:4px;background:#989ba4"></i><i class="a" style="left:899px;top:405px;width:4px;height:4px;background:#b4b6bc"></i><i class="a" style="left:903px;top:405px;width:5px;height:4px;background:#cacbd0"></i><i class="a" style="left:908px;top:405px;width:4px;height:4px;background:#a5a8af"></i><i class="a" style="left:912px;top:405px;width:4px;height:4px;background:#bec0c5"></i><i class="a" style="left:916px;top:405px;width:5px;height:4px;background:#e8e9eb"></i><i class="a" style="left:882px;top:409px;width:4px;height:5px;background:#c8c9ce"></i><i class="a" style="left:886px;top:409px;width:4px;height:5px;background:#c9cbcf"></i><i class="a" style="left:890px;top:409px;width:5px;height:5px;background:#d6d7db"></i><i class="a" style="left:895px;top:409px;width:4px;height:5px;background:#cbccd1"></i><i class="a" style="left:899px;top:409px;width:4px;height:5px;background:#c1c2c7"></i><i class="a" style="left:903px;top:409px;width:5px;height:5px;background:#e2e3e5"></i><i class="a" style="left:908px;top:409px;width:4px;height:5px;background:#c6c8cc"></i><i class="a" style="left:912px;top:409px;width:4px;height:5px;background:#d3d4d8"></i><i class="a" style="left:916px;top:409px;width:5px;height:5px;background:#e5e6e8"></i>
<div class="a td" style="left:956px;top:398px;-webkit-text-stroke-width:0.05px">2025-09-04</div>
<div class="a td" style="left:1058px;top:398px">未确认</div>
<i class="a" style="left:1150px;top:397px;width:4px;height:4px;background:#f1f2f9"></i><i class="a" style="left:1154px;top:397px;width:4px;height:4px;background:#e6e9f5"></i><i class="a" style="left:1158px;top:397px;width:5px;height:4px;background:#f5f6fb"></i><i class="a" style="left:1163px;top:397px;width:4px;height:4px;background:#f1f2f9"></i><i class="a" style="left:1167px;top:397px;width:4px;height:4px;background:#edeff8"></i><i class="a" style="left:1171px;top:397px;width:5px;height:4px;background:#f4f5fb"></i><i class="a" style="left:1150px;top:401px;width:4px;height:4px;background:#afb8df"></i><i class="a" style="left:1154px;top:401px;width:4px;height:4px;background:#aeb6de"></i><i class="a" style="left:1158px;top:401px;width:5px;height:4px;background:#dbdff1"></i><i class="a" style="left:1163px;top:401px;width:4px;height:4px;background:#bdc4e5"></i><i class="a" style="left:1167px;top:401px;width:4px;height:4px;background:#9ca7d7"></i><i class="a" style="left:1171px;top:401px;width:5px;height:4px;background:#d4d8ee"></i><i class="a" style="left:1150px;top:405px;width:4px;height:4px;background:#98a3d6"></i><i class="a" style="left:1154px;top:405px;width:4px;height:4px;background:#8d99d1"></i><i class="a" style="left:1158px;top:405px;width:5px;height:4px;background:#c9cee9"></i><i class="a" style="left:1163px;top:405px;width:4px;height:4px;background:#a4adda"></i><i class="a" style="left:1167px;top:405px;width:4px;height:4px;background:#b0b8df"></i><i class="a" style="left:1171px;top:405px;width:5px;height:4px;background:#d4d8ee"></i><i class="a" style="left:1150px;top:409px;width:4px;height:5px;background:#c0c6e6"></i><i class="a" style="left:1154px;top:409px;width:4px;height:5px;background:#cacfea"></i><i class="a" style="left:1158px;top:409px;width:5px;height:5px;background:#ced3eb"></i><i class="a" style="left:1163px;top:409px;width:4px;height:5px;background:#bdc4e5"></i><i class="a" style="left:1167px;top:409px;width:4px;height:5px;background:#acb5de"></i><i class="a" style="left:1171px;top:409px;width:5px;height:5px;background:#dfe2f2"></i>
<svg class="a" style="left:1338px;top:398px" width="16" height="16" viewBox="0 0 16 16"><circle cx="8" cy="8" r="7.3" fill="none" stroke="#3b82f6" stroke-width="1.3"/><rect x="3.85" y="5.5" width="2.5" height="5.5" rx="1.25" fill="none" stroke="#3b82f6" stroke-width="1.2"/><path d="M8.3 4.9 V11.6 M11.9 4.9 L8.6 8.8 M9.6 7.6 L12.1 11.6" fill="none" stroke="#3b82f6" stroke-width="1.4"/></svg><svg class="a" style="left:1362px;top:398px" width="16" height="16" viewBox="0 0 16 16"><path d="M12.6 3.2 A7 7 0 1 0 14.6 7" fill="none" stroke="#3b82f6" stroke-width="1.3"/><path d="M4 7.6 L7.6 10.8 L15 2" fill="none" stroke="#3b82f6" stroke-width="1.3"/></svg><svg class="a" style="left:1386px;top:398px" width="16" height="16" viewBox="0 0 16 16"><path d="M1 12.9 L8.3 5.6 L10.7 8 L3.4 15.3 Z" fill="none" stroke="#b4b4b4" stroke-width="1.1" stroke-linejoin="round"/><path d="M8.4 0.9 V3.9 M3.5 3.1 L5.6 5.3 M13.4 3.4 L11.3 5.5 M11.9 7.6 H15.3 M11.1 10.2 L13.5 12.5" stroke="#b4b4b4" stroke-width="1.1"/></svg><svg class="a" style="left:1410px;top:398px" width="16" height="16" viewBox="0 0 16 16"><path d="M10 1.7 H2.5 Q1 1.7 1 3.2 V13.5 Q1 15 2.5 15 H13 Q14.5 15 14.5 13.5 V6" fill="none" stroke="#3b82f6" stroke-width="1.3"/><path d="M6.2 10 L15.2 1" stroke="#3b82f6" stroke-width="1.3"/></svg><svg class="a" style="left:1434px;top:398px" width="17" height="17" viewBox="0 0 17 17"><path d="M6.9 4.3 V2 Q6.9 0.8 8.1 0.8 H11.4 L15.3 4.7 V9.8 Q15.3 11 14.1 11 H11.6 M11.4 0.8 V4.7 H15.3" fill="none" stroke="#3b82f6" stroke-width="1.3"/><path d="M0.8 6.9 Q0.8 5.7 2 5.7 H5 L8.9 9.6 V14.2 Q8.9 15.4 7.7 15.4 H2 Q0.8 15.4 0.8 14.2 Z M5 5.7 V9.6 H8.9" fill="none" stroke="#3b82f6" stroke-width="1.3"/></svg>
<div class="a cb" style="left:14px;top:436px"></div>
<div class="a td" style="left:32px;top:434px;-webkit-text-stroke-width:0.05px">3105</div>
<div class="a td red" style="left:94px;top:434px"><span style="-webkit-text-stroke-width:0.05px;letter-spacing:0.25px">339 </span>【在线办理】申请表相关问题</div>
<svg class="a" style="left:659px;top:434px" width="16" height="16" viewBox="0 0 16 16"><path d="M7.9 15.2 C4 15.2 0.8 13 0.8 9.8 C0.8 7.8 1.8 6.2 2.6 4.6 L3.4 7.4 C4.8 5.6 6.4 3.2 6.8 0.8 C8.6 1.8 10.2 3.8 11.4 6 L12.8 3.4 C14.4 5 15.2 7.4 15.2 9.8 C15.2 13 12 15.2 7.9 15.2 Z" fill="none" stroke="#f5a312" stroke-width="1.25" stroke-linejoin="round"/><path d="M6.3 6.6 H10.1 L8.1 8.8 Q10.6 8.8 10.6 10.7 Q10.6 12.6 8.3 12.6 Q6.9 12.6 6 11.9" fill="none" stroke="#f5a312" stroke-width="1.05"/></svg>
<svg class="a" style="left:739px;top:434px" width="16" height="16" viewBox="0 0 16 16"><circle cx="8" cy="8" r="7.4" fill="none" stroke="#ff4d1c" stroke-width="1.1"/><path d="M5.9 4.8 L8.6 3.1 V12" fill="none" stroke="#ff4d1c" stroke-width="1.1"/></svg>
<div class="a td" style="left:808px;top:434px">激活</div>
<i class="a" style="left:882px;top:433px;width:4px;height:4px;background:#f4f4f5"></i><i class="a" style="left:886px;top:433px;width:4px;height:4px;background:#ececee"></i><i class="a" style="left:890px;top:433px;width:5px;height:4px;background:#f5f5f6"></i><i class="a" style="left:895px;top:433px;width:4px;height:4px;background:#f1f2f3"></i><i class="a" style="left:899px;top:433px;width:4px;height:4px;background:#f0f0f2"></i><i class="a" style="left:903px;top:433px;width:5px;height:4px;background:#f5f5f6"></i><i class="a" style="left:908px;top:433px;width:4px;height:4px;background:#f0f1f2"></i><i class="a" style="left:912px;top:433px;width:4px;height:4px;background:#e9eaeb"></i><i class="a" style="left:916px;top:433px;width:5px;height:4px;background:#f5f5f6"></i><i class="a" style="left:882px;top:437px;width:4px;height:4px;background:#b1b4ba"></i><i class="a" style="left:886px;top:437px;width:4px;height:4px;background:#b9bbc1"></i><i class="a" style="left:890px;top:437px;width:5px;height:4px;background:#dedfe2"></i><i class="a" style="left:895px;top:437px;width:4px;height:4px;background:#afb1b8"></i><i class="a" style="left:899px;top:437px;width:4px;height:4px;background:#bdbfc5"></i><i class="a" style="left:903px;top:437px;width:5px;height:4px;background:#dbdcdf"></i><i class="a" style="left:908px;top:437px;width:4px;height:4px;background:#c9cbcf"></i><i class="a" style="left:912px;top:437px;width:4px;height:4px;background:#9ea1a9"></i><i class="a" style="left:916px;top:437px;width:5px;height:4px;background:#e6e7e9"></i><i class="a" style="left:882px;top:441px;width:4px;height:4px;background:#aaacb3"></i><i class="a" style="left:886px;top:441px;width:4px;height:4px;background:#94979f"></i><i class="a" style="left:890px;top:441px;width:5px;height:4px;background:#c6c7cc"></i><i class="a" style="left:895px;top:441px;width:4px;height:4px;background:#8a8d97"></i><i class="a" style="left:899px;top:441px;width:4px;height:4px;background:#b2b4ba"></i><i class="a" style="left:903px;top:441px;width:5px;height:4px;background:#c5c6cb"></i><i class="a" style="left:908px;top:441px;width:4px;height:4px;background:#aeb1b7"></i><i class="a" style="left:912px;top:441px;width:4px;height:4px;background:#a6a8af"></i><i class="a" style="left:916px;top:441px;width:5px;height:4px;background:#e0e1e3"></i><i class="a" style="left:882px;top:445px;width:4px;height:5px;background:#c4c6cb"></i><i class="a" style="left:886px;top:445px;width:4px;height:5px;background:#d2d3d7"></i><i class="a" style="left:890px;top:445px;width:5px;height:5px;background:#d5d6da"></i><i class="a" style="left:895px;top:445px;width:4px;height:5px;background:#cecfd3"></i><i class="a" style="left:899px;top:445px;width:4px;height:5px;background:#bfc1c6"></i><i class="a" style="left:903px;top:445px;width:5px;height:5px;background:#e9eaec"></i><i class="a" style="left:908px;top:445px;width:4px;height:5px;background:#c2c4c9"></i><i class="a" style="left:912px;top:445px;width:4px;height:5px;background:#c8c9ce"></i><i class="a" style="left:916px;top:445px;width:5px;height:5px;background:#e4e5e7"></i>
<div class="a td" style="left:956px;top:434px;-webkit-text-stroke-width:0.05px">2025-09-04</div>
<div class="a td" style="left:1058px;top:434px">未确认</div>
<div class="a td" style="left:1148px;top:434px;color:#f5953f">龚<span style="display:inline-block;width:13px;height:13px;background:#fbd3ad;vertical-align:-2px"></span>喜</div>
<svg class="a" style="left:1338px;top:434px" width="16" height="16" viewBox="0 0 16 16"><circle cx="8" cy="8" r="7.3" fill="none" stroke="#3b82f6" stroke-width="1.3"/><rect x="3.85" y="5.5" width="2.5" height="5.5" rx="1.25" fill="none" stroke="#3b82f6" stroke-width="1.2"/><path d="M8.3 4.9 V11.6 M11.9 4.9 L8.6 8.8 M9.6 7.6 L12.1 11.6" fill="none" stroke="#3b82f6" stroke-width="1.4"/></svg><svg class="a" style="left:1362px;top:434px" width="16" height="16" viewBox="0 0 16 16"><path d="M12.6 3.2 A7 7 0 1 0 14.6 7" fill="none" stroke="#3b82f6" stroke-width="1.3"/><path d="M4 7.6 L7.6 10.8 L15 2" fill="none" stroke="#3b82f6" stroke-width="1.3"/></svg><svg class="a" style="left:1386px;top:434px" width="16" height="16" viewBox="0 0 16 16"><path d="M1 12.9 L8.3 5.6 L10.7 8 L3.4 15.3 Z" fill="none" stroke="#b4b4b4" stroke-width="1.1" stroke-linejoin="round"/><path d="M8.4 0.9 V3.9 M3.5 3.1 L5.6 5.3 M13.4 3.4 L11.3 5.5 M11.9 7.6 H15.3 M11.1 10.2 L13.5 12.5" stroke="#b4b4b4" stroke-width="1.1"/></svg><svg class="a" style="left:1410px;top:434px" width="16" height="16" viewBox="0 0 16 16"><path d="M10 1.7 H2.5 Q1 1.7 1 3.2 V13.5 Q1 15 2.5 15 H13 Q14.5 15 14.5 13.5 V6" fill="none" stroke="#3b82f6" stroke-width="1.3"/><path d="M6.2 10 L15.2 1" stroke="#3b82f6" stroke-width="1.3"/></svg><svg class="a" style="left:1434px;top:434px" width="17" height="17" viewBox="0 0 17 17"><path d="M6.9 4.3 V2 Q6.9 0.8 8.1 0.8 H11.4 L15.3 4.7 V9.8 Q15.3 11 14.1 11 H11.6 M11.4 0.8 V4.7 H15.3" fill="none" stroke="#3b82f6" stroke-width="1.3"/><path d="M0.8 6.9 Q0.8 5.7 2 5.7 H5 L8.9 9.6 V14.2 Q8.9 15.4 7.7 15.4 H2 Q0.8 15.4 0.8 14.2 Z M5 5.7 V9.6 H8.9" fill="none" stroke="#3b82f6" stroke-width="1.3"/></svg>
<div class="a cb" style="left:14px;top:472px"></div>
<div class="a td" style="left:32px;top:470px;-webkit-text-stroke-width:0.05px">3104</div>
<div class="a td red" style="left:94px;top:470px"><span style="-webkit-text-stroke-width:0.05px;letter-spacing:0.25px">350 </span>【业务办理】所有业务的表单问题</div>
<svg class="a" style="left:659px;top:470px" width="16" height="16" viewBox="0 0 16 16"><path d="M7.9 15.2 C4 15.2 0.8 13 0.8 9.8 C0.8 7.8 1.8 6.2 2.6 4.6 L3.4 7.4 C4.8 5.6 6.4 3.2 6.8 0.8 C8.6 1.8 10.2 3.8 11.4 6 L12.8 3.4 C14.4 5 15.2 7.4 15.2 9.8 C15.2 13 12 15.2 7.9 15.2 Z" fill="none" stroke="#b8141b" stroke-width="1.25" stroke-linejoin="round"/><path d="M6.5 7.6 L8.5 6 V12.7" fill="none" stroke="#b8141b" stroke-width="1.05"/></svg>
<svg class="a" style="left:739px;top:470px" width="16" height="16" viewBox="0 0 16 16"><circle cx="8" cy="8" r="7.4" fill="none" stroke="#ff4d1c" stroke-width="1.1"/><path d="M5.9 4.8 L8.6 3.1 V12" fill="none" stroke="#ff4d1c" stroke-width="1.1"/></svg>
<div class="a td" style="left:808px;top:470px">激活</div>
<i class="a" style="left:882px;top:469px;width:4px;height:4px;background:#f3f4f4"></i><i class="a" style="left:886px;top:469px;width:4px;height:4px;background:#ededef"></i><i class="a" style="left:890px;top:469px;width:5px;height:4px;background:#f5f6f7"></i><i class="a" style="left:895px;top:469px;width:4px;height:4px;background:#f3f3f4"></i><i class="a" style="left:899px;top:469px;width:4px;height:4px;background:#ededef"></i><i class="a" style="left:903px;top:469px;width:5px;height:4px;background:#f8f8f9"></i><i class="a" style="left:908px;top:469px;width:4px;height:4px;background:#f2f2f3"></i><i class="a" style="left:912px;top:469px;width:4px;height:4px;background:#eeeef0"></i><i class="a" style="left:916px;top:469px;width:5px;height:4px;background:#f5f5f6"></i><i class="a" style="left:882px;top:473px;width:4px;height:4px;background:#b2b4ba"></i><i class="a" style="left:886px;top:473px;width:4px;height:4px;background:#bfc0c6"></i><i class="a" style="left:890px;top:473px;width:5px;height:4px;background:#d9dadd"></i><i class="a" style="left:895px;top:473px;width:4px;height:4px;background:#aeb0b7"></i><i class="a" style="left:899px;top:473px;width:4px;height:4px;background:#b2b4bb"></i><i class="a" style="left:903px;top:473px;width:5px;height:4px;background:#d3d4d8"></i><i class="a" style="left:908px;top:473px;width:4px;height:4px;background:#c3c5c9"></i><i class="a" style="left:912px;top:473px;width:4px;height:4px;background:#b1b3ba"></i><i class="a" style="left:916px;top:473px;width:5px;height:4px;background:#e1e2e4"></i><i class="a" style="left:882px;top:477px;width:4px;height:4px;background:#bcbec4"></i><i class="a" style="left:886px;top:477px;width:4px;height:4px;background:#81848f"></i><i class="a" style="left:890px;top:477px;width:5px;height:4px;background:#d1d3d6"></i><i class="a" style="left:895px;top:477px;width:4px;height:4px;background:#9497a0"></i><i class="a" style="left:899px;top:477px;width:4px;height:4px;background:#afb1b8"></i><i class="a" style="left:903px;top:477px;width:5px;height:4px;background:#d7d8dc"></i><i class="a" style="left:908px;top:477px;width:4px;height:4px;background:#c4c6cb"></i><i class="a" style="left:912px;top:477px;width:4px;height:4px;background:#bcbec4"></i><i class="a" style="left:916px;top:477px;width:5px;height:4px;background:#eaebec"></i><i class="a" style="left:882px;top:481px;width:4px;height:5px;background:#c5c7cb"></i><i class="a" style="left:886px;top:481px;width:4px;height:5px;background:#d3d4d8"></i><i class="a" style="left:890px;top:481px;width:5px;height:5px;background:#dadbde"></i><i class="a" style="left:895px;top:481px;width:4px;height:5px;background:#c4c6cb"></i><i class="a" style="left:899px;top:481px;width:4px;height:5px;background:#b9bbc1"></i><i class="a" style="left:903px;top:481px;width:5px;height:5px;background:#e9eaec"></i><i class="a" style="left:908px;top:481px;width:4px;height:5px;background:#d7d8db"></i><i class="a" style="left:912px;top:481px;width:4px;height:5px;background:#ced0d4"></i><i class="a" style="left:916px;top:481px;width:5px;height:5px;background:#e8e8ea"></i>
<div class="a td" style="left:956px;top:470px;-webkit-text-stroke-width:0.05px">2025-09-04</div>
<div class="a td" style="left:1058px;top:470px">未确认</div>
<i class="a" style="left:1150px;top:469px;width:4px;height:4px;background:#eff1f9"></i><i class="a" style="left:1154px;top:469px;width:4px;height:4px;background:#e5e8f5"></i><i class="a" style="left:1158px;top:469px;width:5px;height:4px;background:#f1f2f9"></i><i class="a" style="left:1163px;top:469px;width:4px;height:4px;background:#eceef7"></i><i class="a" style="left:1167px;top:469px;width:4px;height:4px;background:#eceef7"></i><i class="a" style="left:1171px;top:469px;width:5px;height:4px;background:#f6f7fb"></i><i class="a" style="left:1176px;top:469px;width:4px;height:4px;background:#f1f3fa"></i><i class="a" style="left:1180px;top:469px;width:4px;height:4px;background:#ebedf7"></i><i class="a" style="left:1184px;top:469px;width:5px;height:4px;background:#f4f5fb"></i><i class="a" style="left:1150px;top:473px;width:4px;height:4px;background:#a7b1dc"></i><i class="a" style="left:1154px;top:473px;width:4px;height:4px;background:#9fa9d9"></i><i class="a" style="left:1158px;top:473px;width:5px;height:4px;background:#cbd0ea"></i><i class="a" style="left:1163px;top:473px;width:4px;height:4px;background:#bbc3e4"></i><i class="a" style="left:1167px;top:473px;width:4px;height:4px;background:#b0b9e0"></i><i class="a" style="left:1171px;top:473px;width:5px;height:4px;background:#ced3eb"></i><i class="a" style="left:1176px;top:473px;width:4px;height:4px;background:#b9c0e3"></i><i class="a" style="left:1180px;top:473px;width:4px;height:4px;background:#a8b1dc"></i><i class="a" style="left:1184px;top:473px;width:5px;height:4px;background:#e5e8f5"></i><i class="a" style="left:1150px;top:477px;width:4px;height:4px;background:#a8b1dc"></i><i class="a" style="left:1154px;top:477px;width:4px;height:4px;background:#7584c8"></i><i class="a" style="left:1158px;top:477px;width:5px;height:4px;background:#cfd4ec"></i><i class="a" style="left:1163px;top:477px;width:4px;height:4px;background:#8a96d0"></i><i class="a" style="left:1167px;top:477px;width:4px;height:4px;background:#afb7df"></i><i class="a" style="left:1171px;top:477px;width:5px;height:4px;background:#d0d5ec"></i><i class="a" style="left:1176px;top:477px;width:4px;height:4px;background:#9da8d8"></i><i class="a" style="left:1180px;top:477px;width:4px;height:4px;background:#a7b1dc"></i><i class="a" style="left:1184px;top:477px;width:5px;height:4px;background:#dfe2f2"></i><i class="a" style="left:1150px;top:481px;width:4px;height:5px;background:#afb7df"></i><i class="a" style="left:1154px;top:481px;width:4px;height:5px;background:#bdc4e5"></i><i class="a" style="left:1158px;top:481px;width:5px;height:5px;background:#ced4ec"></i><i class="a" style="left:1163px;top:481px;width:4px;height:5px;background:#c3cae7"></i><i class="a" style="left:1167px;top:481px;width:4px;height:5px;background:#c0c6e6"></i><i class="a" style="left:1171px;top:481px;width:5px;height:5px;background:#e2e5f4"></i><i class="a" style="left:1176px;top:481px;width:4px;height:5px;background:#cbd1ea"></i><i class="a" style="left:1180px;top:481px;width:4px;height:5px;background:#c5cbe8"></i><i class="a" style="left:1184px;top:481px;width:5px;height:5px;background:#e6e9f5"></i>
<svg class="a" style="left:1338px;top:470px" width="16" height="16" viewBox="0 0 16 16"><circle cx="8" cy="8" r="7.3" fill="none" stroke="#3b82f6" stroke-width="1.3"/><rect x="3.85" y="5.5" width="2.5" height="5.5" rx="1.25" fill="none" stroke="#3b82f6" stroke-width="1.2"/><path d="M8.3 4.9 V11.6 M11.9 4.9 L8.6 8.8 M9.6 7.6 L12.1 11.6" fill="none" stroke="#3b82f6" stroke-width="1.4"/></svg><svg class="a" style="left:1362px;top:470px" width="16" height="16" viewBox="0 0 16 16"><path d="M12.6 3.2 A7 7 0 1 0 14.6 7" fill="none" stroke="#3b82f6" stroke-width="1.3"/><path d="M4 7.6 L7.6 10.8 L15 2" fill="none" stroke="#3b82f6" stroke-width="1.3"/></svg><svg class="a" style="left:1386px;top:470px" width="16" height="16" viewBox="0 0 16 16"><path d="M1 12.9 L8.3 5.6 L10.7 8 L3.4 15.3 Z" fill="none" stroke="#b4b4b4" stroke-width="1.1" stroke-linejoin="round"/><path d="M8.4 0.9 V3.9 M3.5 3.1 L5.6 5.3 M13.4 3.4 L11.3 5.5 M11.9 7.6 H15.3 M11.1 10.2 L13.5 12.5" stroke="#b4b4b4" stroke-width="1.1"/></svg><svg class="a" style="left:1410px;top:470px" width="16" height="16" viewBox="0 0 16 16"><path d="M10 1.7 H2.5 Q1 1.7 1 3.2 V13.5 Q1 15 2.5 15 H13 Q14.5 15 14.5 13.5 V6" fill="none" stroke="#3b82f6" stroke-width="1.3"/><path d="M6.2 10 L15.2 1" stroke="#3b82f6" stroke-width="1.3"/></svg><svg class="a" style="left:1434px;top:470px" width="17" height="17" viewBox="0 0 17 17"><path d="M6.9 4.3 V2 Q6.9 0.8 8.1 0.8 H11.4 L15.3 4.7 V9.8 Q15.3 11 14.1 11 H11.6 M11.4 0.8 V4.7 H15.3" fill="none" stroke="#3b82f6" stroke-width="1.3"/><path d="M0.8 6.9 Q0.8 5.7 2 5.7 H5 L8.9 9.6 V14.2 Q8.9 15.4 7.7 15.4 H2 Q0.8 15.4 0.8 14.2 Z M5 5.7 V9.6 H8.9" fill="none" stroke="#3b82f6" stroke-width="1.3"/></svg></div><!--/rows-->
</body></html>
